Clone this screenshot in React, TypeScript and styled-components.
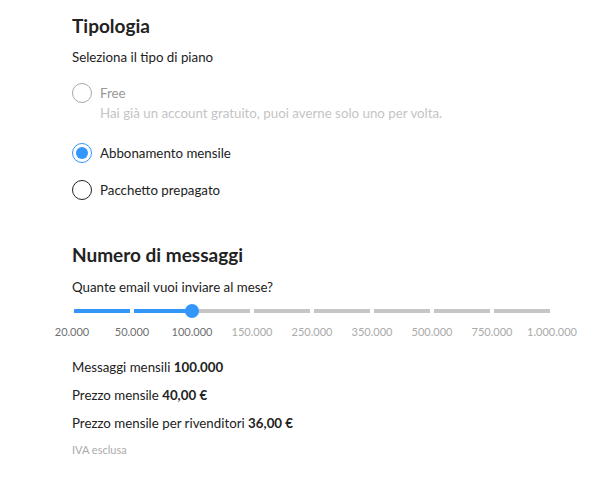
import React from "react";
import styled, { createGlobalStyle } from "styled-components";

const Global = createGlobalStyle`
  html, body { margin: 0; padding: 0; background: #fff; }
  body { font-family: "Source Sans Pro", Lato, "Liberation Sans", sans-serif; color: #222; }
  * { box-sizing: border-box; }
`;

const Page = styled.div`
  width: 614px;
  height: 486px;
  padding: 14px 0 0 72px;
  display: flex;
  flex-direction: column;
`;

const Heading = styled.h2<{ $mt?: number }>`
  margin: ${(p) => p.$mt ?? 0}px 0 0;
  font-size: 19px;
  font-weight: 700;
  line-height: 24px;
  color: #222;
`;

const Label = styled.div<{ $mt: number }>`
  margin-top: ${(p) => p.$mt}px;
  font-size: 13.3px;
  line-height: 18px;
  color: #222;
`;

const Options = styled.div`
  display: flex;
  flex-direction: column;
  margin-top: 17px;
  gap: 17px;
`;

const Option = styled.label<{ $disabled?: boolean }>`
  display: flex;
  align-items: flex-start;
  gap: 8px;
  color: ${(p) => (p.$disabled ? "#999" : "#222")};
  font-size: 13.3px;
  line-height: 20px;
`;

const Circle = styled.span<{ $state: "disabled" | "checked" | "idle" }>`
  flex: none;
  width: 20px;
  height: 20px;
  border-radius: 50%;
  border: 1.5px solid
    ${(p) => (p.$state === "disabled" ? "#a8a8a8" : p.$state === "checked" ? "#3396fa" : "#222")};
  display: flex;
  align-items: center;
  justify-content: center;
  &::after {
    content: "";
    display: ${(p) => (p.$state === "checked" ? "block" : "none")};
    width: 12px;
    height: 12px;
    border-radius: 50%;
    background: #3396fa;
  }
`;

const OptionText = styled.div`
  display: flex;
  flex-direction: column;
  padding-bottom: 3px;
`;

const Hint = styled.span`
  color: #c4c4c4;
  font-size: 13.3px;
  line-height: 20px;
`;

const Slider = styled.div`
  position: relative;
  margin-top: 13px;
  width: 480px;
`;

const Track = styled.div`
  display: flex;
  gap: 4px;
  padding: 0 2px;
  height: 4px;
`;

const Segment = styled.div<{ $active: boolean }>`
  flex: 1;
  background: ${(p) => (p.$active ? "#3396fa" : "#c6c6c6")};
`;

const Thumb = styled.div`
  position: absolute;
  top: -5px;
  width: 14px;
  height: 14px;
  border-radius: 50%;
  background: #3396fa;
`;

const Ticks = styled.div`
  display: grid;
  grid-template-columns: repeat(9, 60px);
  margin: 12px 0 0 -30px;
`;

const Tick = styled.span<{ $active: boolean }>`
  text-align: center;
  font-size: 11px;
  line-height: 14px;
  color: ${(p) => (p.$active ? "#6f6f6f" : "#aaa")};
`;

const Summary = styled.div`
  display: flex;
  flex-direction: column;
  gap: 10px;
  margin-top: 19px;
`;

const Line = styled.div`
  font-size: 13.3px;
  line-height: 18px;
  color: #222;
  b { font-weight: 700; }
`;

const Note = styled.div`
  margin-top: 11px;
  font-size: 11px;
  line-height: 14px;
  color: #aaa;
`;

const steps = ["20.000", "50.000", "100.000", "150.000", "250.000", "350.000", "500.000", "750.000", "1.000.000"];
const selected = 2;

export default function App() {
  return (
    <>
      <Global />
      <Page>
        <Heading>Tipologia</Heading>
        <Label $mt={10}>Seleziona il tipo di piano</Label>
        <Options>
          <Option $disabled>
            <Circle $state="disabled" />
            <OptionText>
              <span>Free</span>
              <Hint>Hai già un account gratuito, puoi averne solo uno per volta.</Hint>
            </OptionText>
          </Option>
          <Option>
            <Circle $state="checked" />
            <span>Abbonamento mensile</span>
          </Option>
          <Option>
            <Circle $state="idle" />
            <span>Pacchetto prepagato</span>
          </Option>
        </Options>
        <Heading $mt={43}>Numero di messaggi</Heading>
        <Label $mt={11}>Quante email vuoi inviare al mese?</Label>
        <Slider>
          <Track>
            {steps.slice(1).map((s, i) => (
              <Segment key={s} $active={i < selected} />
            ))}
          </Track>
          <Thumb style={{ left: selected * 60 - 7 }} />
        </Slider>
        <Ticks>
          {steps.map((s, i) => (
            <Tick key={s} $active={i <= selected}>
              {s}
            </Tick>
          ))}
        </Ticks>
        <Summary>
          <Line>
            Messaggi mensili <b>100.000</b>
          </Line>
          <Line>
            Prezzo mensile <b>40,00 €</b>
          </Line>
          <Line>
            Prezzo mensile per rivenditori <b>36,00 €</b>
          </Line>
        </Summary>
        <Note>IVA esclusa</Note>
      </Page>
    </>
  );
}
